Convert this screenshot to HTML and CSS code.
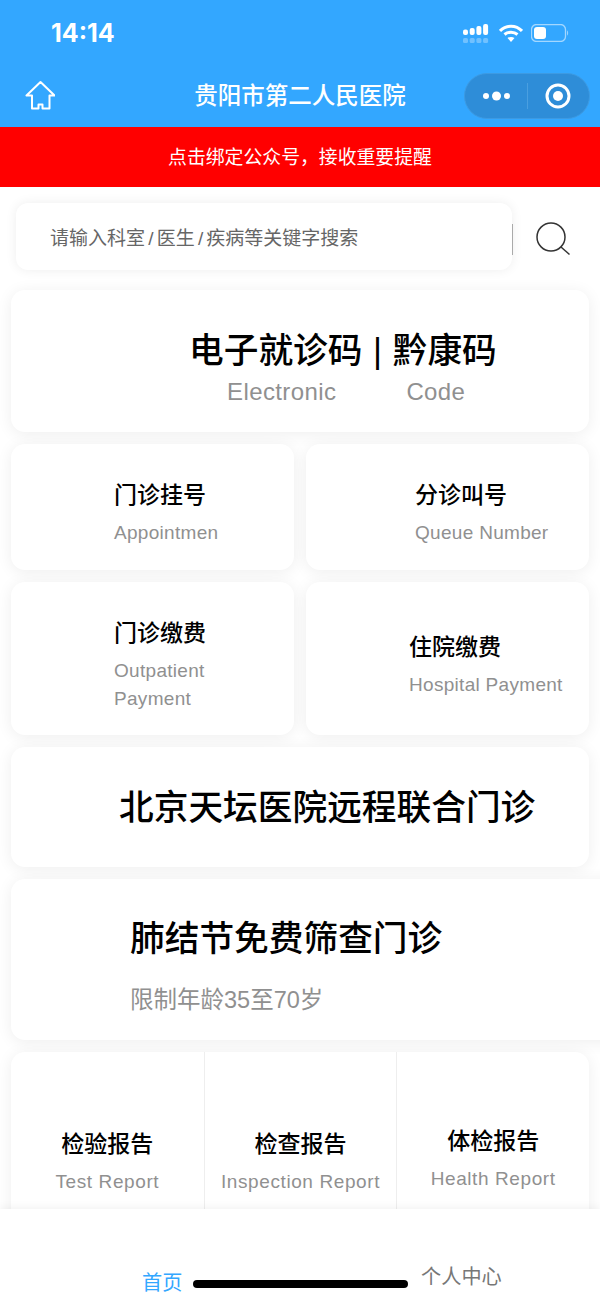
FILE: index.html
```html
<!DOCTYPE html>
<html lang="zh-CN">
<head>
    <meta charset="UTF-8">
    <title>贵阳市第二人民医院</title>
    <link rel="stylesheet" href="styles.css">
</head>
<body>
    <div class="phone">
        <div class="header">
            <div class="status">
                <span class="time">14:14</span>
                <div class="status-icons">
                    <svg width="28" height="19" viewBox="0 0 28 19" fill="#fff">
                        <rect x="0" y="5.500" width="5" height="5.500" rx="2"/>
                        <rect x="6.700" y="4" width="5" height="7" rx="2"/>
                        <rect x="13.400" y="2" width="5" height="9" rx="2"/>
                        <rect x="20.100" y="0" width="5" height="11" rx="2"/>
                        <g opacity="0.3">
                            <rect x="0" y="14" width="5" height="5" rx="1.500"/>
                            <rect x="6.700" y="14" width="5" height="5" rx="1.500"/>
                            <rect x="13.400" y="14" width="5" height="5" rx="1.500"/>
                            <rect x="20.100" y="14" width="5" height="5" rx="1.500"/>
                        </g>
                    </svg>
                    <svg width="24" height="18" viewBox="0 0 24 18" fill="none" stroke="#fff" stroke-width="3">
                        <path d="M1 7C7 0.500 17 0.500 23 7"/>
                        <path d="M5.500 10.500C9 7.500 15 7.500 18.500 10.500"/>
                        <path d="M12 18L8.500 14C10.500 12.500 13.500 12.500 15.500 14Z" fill="#fff" stroke="none"/>
                    </svg>
                    <svg width="38" height="18" viewBox="0 0 38 18">
                        <rect x="0.500" y="0.500" width="34" height="17" rx="5" fill="none" stroke="#fff" stroke-opacity="0.55" stroke-width="1.300"/>
                        <rect x="3" y="3" width="12" height="12" rx="3" fill="#fff"/>
                        <path d="M36 6.500C37.500 7 37.500 11 36 11.500Z" fill="#fff" fill-opacity="0.5"/>
                    </svg>
                </div>
            </div>
            <div class="navbar">
                <svg class="home" width="30" height="30" viewBox="0 0 30 30" fill="none" stroke="#fff" stroke-width="2" stroke-linejoin="round">
                    <path d="M15.500 2L1.500 15.500H7V28.500H13.500V24.500H17.500V28.500H24.500V15.500H29.500Z"/>
                </svg>
                <div class="nav-title">贵阳市第二人民医院</div>
                <div class="capsule">
                    <svg width="30" height="12" viewBox="0 0 30 12" fill="#fff">
                        <circle cx="4" cy="6" r="3"/>
                        <circle cx="14.500" cy="6" r="4.500"/>
                        <circle cx="25" cy="6" r="3"/>
                    </svg>
                    <span class="capsule-line"></span>
                    <svg width="26" height="26" viewBox="0 0 26 26">
                        <circle cx="13" cy="13" r="11" fill="none" stroke="#fff" stroke-width="3"/>
                        <circle cx="13" cy="13" r="5" fill="#fff"/>
                    </svg>
                </div>
            </div>
        </div>
        <div class="notice">点击绑定公众号，接收重要提醒</div>

        <div class="search-row">
            <div class="search-box">
                <span class="search-hint">请输入科室<span class="slash">/</span>医生<span class="slash">/</span>疾病等关键字搜索</span>
            </div>
            <svg class="search-icon" width="36" height="36" viewBox="0 0 36 36" fill="none" stroke="#333" stroke-width="1.500">
                <circle cx="16" cy="16" r="14"/>
                <path d="M26 26L34.500 33.500"/>
            </svg>
        </div>

        <div class="content">
            <div class="card card-code">
                <div class="code-title">电子就诊码 | 黔康码</div>
                <div class="code-sub"><span>Electronic</span><span>Code</span></div>
            </div>
            <div class="row">
                <div class="card item item-a">
                    <div class="item-title">门诊挂号</div>
                    <div class="item-sub">Appointmen</div>
                </div>
                <div class="card item item-b">
                    <div class="item-title">分诊叫号</div>
                    <div class="item-sub">Queue Number</div>
                </div>
            </div>
            <div class="row">
                <div class="card item item-a item-tall">
                    <div class="item-title">门诊缴费</div>
                    <div class="item-sub">Outpatient<br>Payment</div>
                </div>
                <div class="card item item-c item-tall">
                    <div class="item-title">住院缴费</div>
                    <div class="item-sub">Hospital Payment</div>
                </div>
            </div>
            <div class="card card-remote">北京天坛医院远程联合门诊</div>
            <div class="card card-lung">
                <div class="lung-title">肺结节免费筛查门诊</div>
                <div class="lung-sub">限制年龄35至70岁</div>
            </div>
            <div class="card reports">
                <div class="report">
                    <div class="item-title">检验报告</div>
                    <div class="item-sub">Test Report</div>
                </div>
                <div class="report">
                    <div class="item-title">检查报告</div>
                    <div class="item-sub">Inspection Report</div>
                </div>
                <div class="report report-up">
                    <div class="item-title">体检报告</div>
                    <div class="item-sub">Health Report</div>
                </div>
            </div>
        </div>

        <div class="tabbar">
            <span class="tab tab-on">首页</span>
            <span class="tab tab-off">个人中心</span>
            <div class="home-bar"></div>
        </div>
    </div>
</body>
</html>
```

FILE: styles.css
```css
* { box-sizing: border-box; }
html, body { margin: 0; padding: 0; }
body { font-family: "Liberation Sans", "Noto Sans CJK SC", sans-serif; background: #fff; }
.phone { position: relative; width: 600px; height: 1299px; overflow: hidden; background: #fff; }

.header { height: 127px; background: #33a7ff; color: #fff; }
.status { display: flex; justify-content: space-between; align-items: center; height: 66px; padding: 0 31px 0 51px; }
.time { font-family: Inter, "Liberation Sans", sans-serif; font-size: 25px; font-weight: 700; }
.status-icons { display: flex; align-items: center; gap: 8px; }
.navbar { display: flex; align-items: center; height: 61px; padding: 0 10px 4px 25px; }
.home { flex: none; }
.nav-title { flex: 1; padding-left: 81px; margin-bottom: 2px; text-align: center; font-size: 23.500px; font-weight: 500; }
.capsule { display: flex; align-items: center; width: 126px; height: 46px; margin-top: 2px; padding: 0 18px 0 17px; justify-content: space-between; background: #2e8dd8; border: 1px solid #3d9ae2; border-radius: 23px; }
.capsule-line { width: 1px; height: 26px; margin-right: 2px; background: #4a9fe0; }

.notice { height: 60px; line-height: 62px; background: #f00; color: #fff; text-align: center; font-size: 18.850px; }

.search-row { display: flex; align-items: center; height: 67px; margin-top: 16px; padding-left: 16px; }
.search-box { width: 496px; height: 67px; display: flex; align-items: center; padding-left: 34px; background: #fff; border-radius: 12px; box-shadow: 0 0 12px rgba(0,0,0,0.07); position: relative; }
.search-box::after { content: ""; position: absolute; right: -1px; top: 21px; width: 1px; height: 31px; background: #aaa; }
.search-hint { font-size: 19px; color: #666; }
.slash { padding: 0 3.200px; }
.search-icon { margin: 4px 0 0 23px; }

.content { display: flex; flex-direction: column; gap: 12px; margin-top: 20px; padding: 0 11px; }
.card { background: #fff; border-radius: 14px; box-shadow: 0 2px 16px rgba(0,0,0,0.07); }
.row { display: grid; grid-template-columns: 1fr 1fr; gap: 12px; }

.card-code { height: 142px; padding-top: 40px; }
.code-title { padding-left: 178px; font-size: 34.700px; font-weight: 500; line-height: 42px; word-spacing: 1px; color: #000; white-space: pre; }
.code-sub { display: flex; gap: 70px; padding-left: 216px; margin-top: 5px; font-size: 24px; line-height: 30px; color: #909090; letter-spacing: 0.400px; }

.item { height: 126px; padding-top: 36px; }
.item-a { padding-left: 103px; }
.item-b { padding-left: 109px; }
.item-c { padding-left: 103px; }
.item-tall { height: 153px; }
.item-c.item-tall { padding-top: 50px; }
.item-title { font-size: 23px; font-weight: 500; line-height: 30px; color: #000; }
.item-sub { margin-top: 9px; font-size: 19px; line-height: 28px; color: #909090; letter-spacing: 0.300px; }

.card-remote { height: 120px; padding: 2px 0 0 108px; line-height: 118px; font-size: 34.700px; font-weight: 500; color: #000; }
.card-lung { height: 161px; width: 620px; padding: 37px 0 0 119px; }
.lung-title { font-size: 34.700px; font-weight: 500; line-height: 46px; color: #000; }
.lung-sub { margin-top: 22px; font-size: 23.500px; line-height: 32px; color: #909090; }

.reports { display: grid; grid-template-columns: repeat(3, 1fr); height: 200px; }
.report { padding-top: 77px; text-align: center; border-left: 1px solid #eee; }
.report:first-child { border-left: 0; }
.report-up { padding-top: 74px; }
.report .item-sub { letter-spacing: 0.600px; }

.tabbar { position: absolute; left: 0; right: 0; bottom: 0; height: 90px; background: #fff; box-shadow: 0 -2px 8px rgba(0,0,0,0.05); }
.tab { position: absolute; font-size: 20.200px; line-height: 28px; }
.tab-on { left: 142px; top: 60px; color: #33a7ff; }
.tab-off { left: 421px; top: 54px; color: #777; }
.home-bar { position: absolute; left: 193px; top: 71px; width: 215px; height: 8px; background: #000; border-radius: 4px; }
```
